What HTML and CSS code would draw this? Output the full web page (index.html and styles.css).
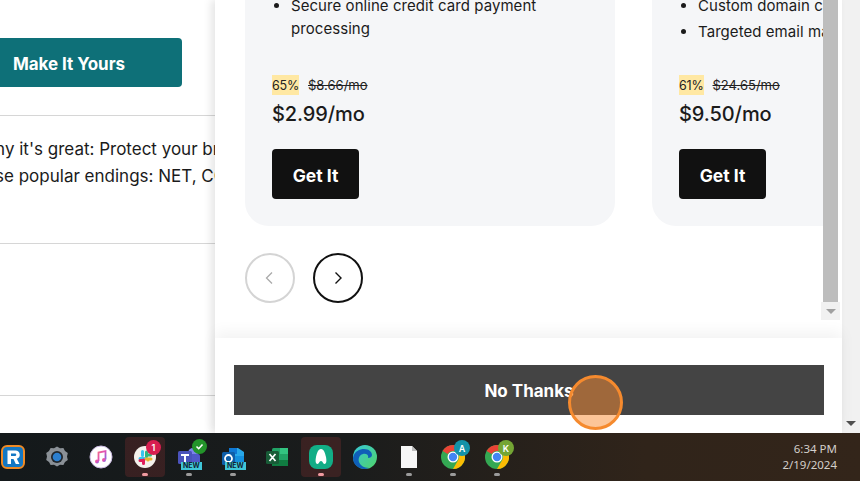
FILE: index.html
```html
<!DOCTYPE html>
<html lang="en">
<head>
<meta charset="utf-8">
<title>Upgrade offers</title>
<link rel="stylesheet" href="styles.css">
</head>
<body>
<div class="window">
  <main class="page">
    <section class="hero">
      <a class="cta">Make It Yours</a>
    </section>
    <section class="why">
      <p class="why-one">Here's why it's great: Protect your brand</p>
      <p class="why-two">Choose these popular endings: NET, CO</p>
    </section>
    <section class="blank"></section>
  </main>
  <aside class="panel">
    <div class="scroller">
      <div class="viewport">
        <div class="cards">
          <article class="card">
            <ul class="features">
              <li>Secure online credit card payment processing</li>
            </ul>
            <div class="was"><span class="off">65%</span><s>$8.66/mo</s></div>
            <div class="price">$2.99/mo</div>
            <button class="get">Get It</button>
          </article>
          <article class="card">
            <ul class="features">
              <li>Custom domain c</li>
              <li>Targeted email marketing</li>
            </ul>
            <div class="was"><span class="off">61%</span><s>$24.65/mo</s></div>
            <div class="price">$9.50/mo</div>
            <button class="get">Get It</button>
          </article>
        </div>
        <div class="pager">
          <button class="round round-off"><svg width="14" height="14" viewBox="0 0 14 14"><path d="M9 1.500 3.500 7 9 12.500" fill="none" stroke="#aaa" stroke-width="1.300"/></svg></button>
          <button class="round"><svg width="14" height="14" viewBox="0 0 14 14"><path d="M4.500 1.500 10 7 4.500 12.500" fill="none" stroke="#111" stroke-width="1.400"/></svg></button>
        </div>
      </div>
      <div class="vbar">
        <div class="thumb"></div>
        <div class="vbar-btn"><i class="arrow arrow-grey"></i></div>
      </div>
    </div>
    <footer class="panel-foot">
      <button class="thanks">No Thanks</button>
    </footer>
  </aside>
  <div class="pagebar"><i class="arrow"></i></div>
  <div class="cursor"></div>
</div>
<nav class="taskbar">
  <div class="task">
    <svg width="24" height="24" viewBox="0 0 24 24"><rect x="1" y="1" width="22" height="22" rx="5" fill="#1478c4" stroke="#f08a24" stroke-width="2"/><path d="M6.500 19V5.500h8a4.200 4.200 0 0 1 1.300 8.200L18.500 19h-3.700l-2.300-5H10v5zM10 8.500V11h4a1.250 1.250 0 0 0 0-2.500z" fill="#fff" fill-rule="evenodd"/></svg>
  </div>
  <div class="task">
    <svg width="24" height="24" viewBox="0 0 24 24"><path d="M12 1.500l3 1.800 3.400-.3 1.600 3 2.800 2-.8 3.500.8 3.500-2.800 2-1.600 3-3.400-.3-3 1.800-3-1.800-3.400.3-1.600-3-2.800-2 .8-3.500L1.200 8l2.800-2 1.600-3 3.400.3z" fill="#8a9096"/><circle cx="12" cy="12" r="6" fill="#20262c"/><circle cx="12" cy="12" r="4.300" fill="#2b7fd0"/></svg>
  </div>
  <div class="task">
    <svg width="24" height="24" viewBox="0 0 24 24"><defs><linearGradient id="mu" x1="0" y1="0" x2="1" y2="1"><stop offset="0" stop-color="#f26a8a"/><stop offset=".5" stop-color="#e050b8"/><stop offset="1" stop-color="#6a70e8"/></linearGradient></defs><circle cx="12" cy="12" r="11" fill="#fff" stroke="#c8b8e0"/><path d="M9.500 16V7.500l7-1.500v8.500" fill="none" stroke="url(#mu)" stroke-width="1.800"/><circle cx="8" cy="16.500" r="2" fill="url(#mu)"/><circle cx="15" cy="15" r="2" fill="url(#mu)"/></svg>
  </div>
  <div class="task task-open">
    <svg width="24" height="24" viewBox="0 0 24 24"><circle cx="12" cy="12" r="11" fill="#f4f1ec"/><path d="M7 13.500h4.500M9.500 6.500v4" stroke="#36c5f0" stroke-width="3" stroke-linecap="round"/><path d="M13.500 7v4.500M13.500 10h4" stroke="#2eb67d" stroke-width="3" stroke-linecap="round"/><path d="M13 14h5M15 14v1" stroke="#ecb22e" stroke-width="3" stroke-linecap="round"/><path d="M10.500 15v3.500M7 15.500h3" stroke="#e01e5a" stroke-width="3" stroke-linecap="round"/></svg>
    <span class="badge badge-red">1</span>
    <b class="dot dot-on"></b>
  </div>
  <div class="task">
    <svg width="24" height="24" viewBox="0 0 24 24"><circle cx="16" cy="8" r="5" fill="#7b83eb"/><rect x="11" y="9" width="12" height="11" rx="2" fill="#5059c9"/><rect x="1" y="6" width="14" height="13" rx="1.500" fill="#4b53bc"/><path d="M4 9h8v2H9v6H7v-6H4z" fill="#fff"/></svg>
    <span class="tag">NEW</span>
    <span class="badge badge-green"><svg width="9" height="9" viewBox="0 0 9 9"><path d="M1.500 4.500 3.700 6.700 7.500 2.500" fill="none" stroke="#fff" stroke-width="1.600"/></svg></span>
    <b class="dot"></b>
  </div>
  <div class="task">
    <svg width="24" height="24" viewBox="0 0 24 24"><path d="M8 3h9l6 4v9H8z" fill="#28a8ea"/><path d="M8 3h8v6H8z" fill="#0f78d4"/><path d="M8 11h15v8a2 2 0 0 1-2 2H8z" fill="#1490df"/><rect x="1" y="7" width="13" height="13" rx="1.500" fill="#0f5ea8"/><circle cx="7.500" cy="13.500" r="3.500" fill="none" stroke="#fff" stroke-width="1.800"/></svg>
    <span class="tag">NEW</span>
    <b class="dot"></b>
  </div>
  <div class="task">
    <svg width="24" height="24" viewBox="0 0 24 24"><rect x="7" y="3" width="16" height="18" rx="1.500" fill="#21a366"/><path d="M15 3h8v6h-8z" fill="#33c481"/><path d="M7 15h16v6H7z" fill="#107c41"/><rect x="1" y="6" width="13" height="13" rx="1.500" fill="#185c37"/><path d="M4.500 9 10.500 16M10.500 9 4.500 16" stroke="#fff" stroke-width="1.700"/></svg>
  </div>
  <div class="task task-open">
    <svg width="26" height="26" viewBox="0 0 26 26"><rect x="1" y="1" width="24" height="24" rx="8" fill="#12ad86"/><path d="M13 5c3 0 4 4 5 8 .6 3 .8 7-1.500 7-1.700 0-1.500-3-3.500-3s-1.800 3-3.500 3C7.200 20 7.400 16 8 13c1-4 2-8 5-8z" fill="#fff"/></svg>
    <b class="dot dot-on"></b>
  </div>
  <div class="task">
    <svg width="26" height="26" viewBox="0 0 26 26"><defs><linearGradient id="ed" x1="0" y1="0" x2="1" y2="1"><stop offset="0" stop-color="#37c8d8"/><stop offset="1" stop-color="#50d468"/></linearGradient></defs><circle cx="13" cy="13" r="12" fill="url(#ed)"/><path d="M1 14C2 7 8 5 12 5c5 0 8 3 8 6 0 2-2 3-4 3 1-3-2-5-5-4-4 1-5 5-4 8 1 3 5 6 10 6-8 3-16-2-16-10z" fill="#0f5fb8"/></svg>
  </div>
  <div class="task">
    <svg width="18" height="24" viewBox="0 0 18 24"><path d="M1 1h11l5 5v17H1z" fill="#f6f6f6"/><path d="M12 1v5h5z" fill="#bdbdbd"/></svg>
    <b class="dot"></b>
  </div>
  <div class="task">
    <svg width="24" height="24" viewBox="0 0 24 24"><circle cx="12" cy="12" r="12" fill="#34a853"/><path d="M12 0a12 12 0 0 1 10.400 6H12a6 6 0 0 0-5.200 3L1.600 6A12 12 0 0 1 12 0z" fill="#ea4335"/><path d="M22.400 6A12 12 0 0 1 12 24l5.200-9a6 6 0 0 0 0-6z" fill="#fbbc04"/><circle cx="12" cy="12" r="5.500" fill="#fff"/><circle cx="12" cy="12" r="4.200" fill="#4285f4"/></svg>
    <span class="badge badge-teal">A</span>
    <b class="dot"></b>
  </div>
  <div class="task">
    <svg width="24" height="24" viewBox="0 0 24 24"><circle cx="12" cy="12" r="12" fill="#34a853"/><path d="M12 0a12 12 0 0 1 10.400 6H12a6 6 0 0 0-5.200 3L1.600 6A12 12 0 0 1 12 0z" fill="#ea4335"/><path d="M22.400 6A12 12 0 0 1 12 24l5.200-9a6 6 0 0 0 0-6z" fill="#fbbc04"/><circle cx="12" cy="12" r="5.500" fill="#fff"/><circle cx="12" cy="12" r="4.200" fill="#4285f4"/></svg>
    <span class="badge badge-olive">K</span>
    <b class="dot"></b>
  </div>
  <div class="clock">
    <span>6:34 PM</span>
    <span>2/19/2024</span>
  </div>
</nav>
</body>
</html>
```

FILE: styles.css
```css
* { box-sizing: border-box; }
html, body { margin: 0; padding: 0; height: 100%; overflow: hidden; background: #fff; }
body { font-family: Inter, "Liberation Sans", sans-serif; color: #111; display: flex; flex-direction: column; }
button { font-family: inherit; cursor: pointer; }

.window { position: relative; height: 433px; display: flex; overflow: hidden; background: #fff; }

/* page behind the drawer */
.page { width: 215px; flex: none; overflow: hidden; display: flex; flex-direction: column; }
.hero { height: 116px; padding-top: 38px; border-bottom: 1px solid #d6d6d6; flex: none; }
.cta { display: flex; align-items: center; width: 182px; height: 49px; padding: 2px 0 0 13px; border-radius: 0 4px 4px 0; background: #0e7078; color: #fff; font-size: 17px; font-weight: 700; letter-spacing: -.05px; }
.why { height: 128px; padding-top: 20px; border-bottom: 1px solid #d6d6d6; flex: none; }
.why p { margin: 0; white-space: nowrap; font-size: 17px; line-height: 27px; color: #1b1b1b; }
.why-one { margin-left: -76px !important; }
.why-two { margin-left: -97px !important; }
.blank { height: 152px; border-bottom: 1px solid #d6d6d6; flex: none; }

/* drawer */
.panel { width: 627px; flex: none; display: flex; flex-direction: column; background: #fff; box-shadow: -4px 0 8px rgba(0,0,0,.1); position: relative; }
.scroller { height: 338px; flex: none; display: flex; }
.viewport { width: 608px; margin-right: -2px; height: 320px; overflow: hidden; display: flex; flex-direction: column; justify-content: flex-end; padding-left: 30px; }
.cards { display: flex; align-items: flex-end; gap: 37px; flex: none; }
.card { width: 370px; flex: none; padding: 0 27px 27px; background: #f5f6f8; border-radius: 0 0 24px 24px; }
.features { margin: 0 0 35px; padding: 0 0 0 19px; font-size: 15px; line-height: 23px; letter-spacing: .06px; color: #1b1b1b; }
.features li { margin-bottom: 3px; }
.card:last-child .features { margin-bottom: 32px; }
.card:last-child .features li { white-space: nowrap; }
.was { display: flex; align-items: center; gap: 9px; font-size: 13px; height: 20px; color: #222; }
.off { background: #ffe8a3; height: 20px; line-height: 21px; font-size: 12.500px; letter-spacing: -.2px; }
.price { font-size: 20px; font-weight: 500; line-height: 26px; margin-top: 6px; letter-spacing: -.1px; color: #1b1b1b; }
.get { display: block; width: 87px; height: 50px; margin-top: 22px; padding: 2px 0 0; border: 0; border-radius: 4px; background: #111; color: #fff; font-size: 17.500px; font-weight: 700; }
.pager { display: flex; gap: 18px; padding: 27px 0 17px; flex: none; }
.round { width: 50px; height: 50px; padding: 0; border-radius: 50%; border: 2px solid #111; background: #fff; display: flex; align-items: center; justify-content: center; }
.round-off { border-color: #d4d4d4; }

.vbar { width: 19px; height: 320px; flex: none; position: relative; display: flex; flex-direction: column; }
.thumb { height: 302px; margin: 0 2px; background: #bdbdbd; }
.vbar-btn { flex: 1; background: #f1f1f1; display: flex; align-items: center; justify-content: center; }
.arrow { display: block; width: 0; height: 0; border-left: 5px solid transparent; border-right: 5px solid transparent; border-top: 5px solid #505050; }
.arrow-grey { border-top-color: #a0a0a0; }

.panel-foot { flex: 1; padding: 27px 18px 18px 19px; background: #fff; box-shadow: 0 -6px 14px rgba(0,0,0,.05); position: relative; }
.thanks { display: block; width: 590px; height: 50px; padding: 2px 0 0; border: 0; background: #444; color: #fff; font-size: 17px; font-weight: 700; }

.pagebar { flex: 1; background: #f1f1f1; display: flex; align-items: flex-end; justify-content: center; padding-bottom: 7px; }

.cursor { position: absolute; left: 568px; top: 375px; width: 55px; height: 55px; border-radius: 50%; border: 3px solid #f58a2e; background: rgba(250,140,50,.5); }

/* taskbar */
.taskbar { height: 48px; flex: none; display: flex; align-items: stretch; background: linear-gradient(90deg, #14191b 0%, #1a1c1c 40%, #30241a 75%, #33251a 100%); color: #d3cfca; }
.task { position: relative; width: 44px; flex: none; display: flex; align-items: center; justify-content: center; }
.task:first-child { margin-left: -9px; }
.task-open::before { content: ""; position: absolute; left: 2px; right: 2px; top: 4px; bottom: 4px; border-radius: 4px; background: rgba(190,60,60,.2); }
.task svg { position: relative; }
.dot { position: absolute; left: 50%; bottom: 5px; margin-left: -3px; width: 6px; height: 3px; border-radius: 2px; background: #9b9b9b; }
.dot-on { background: #f09aa0; }
.badge { position: absolute; left: 23px; top: 7px; width: 15px; height: 15px; border-radius: 50%; display: flex; align-items: center; justify-content: center; color: #fff; font-size: 9px; font-weight: 600; }
.badge-red { background: #d81e50; }
.badge-green { background: #23942a; left: 25px; top: 6px; }
.badge-teal { background: #1392a8; left: 23px; top: 7px; width: 16px; height: 16px; }
.badge-olive { background: #74a534; left: 23px; top: 7px; width: 16px; height: 16px; }
.tag { position: absolute; left: 14px; bottom: 11px; padding: 0 2px; background: #3fc6d8; color: #123; font-size: 7px; line-height: 8px; font-weight: 700; }
.clock { margin-left: auto; padding: 8px 23px 0 0; display: flex; flex-direction: column; align-items: flex-end; font-family: "Noto Sans", sans-serif; font-size: 11.500px; line-height: 16px; color: #d3cfca; }
```
